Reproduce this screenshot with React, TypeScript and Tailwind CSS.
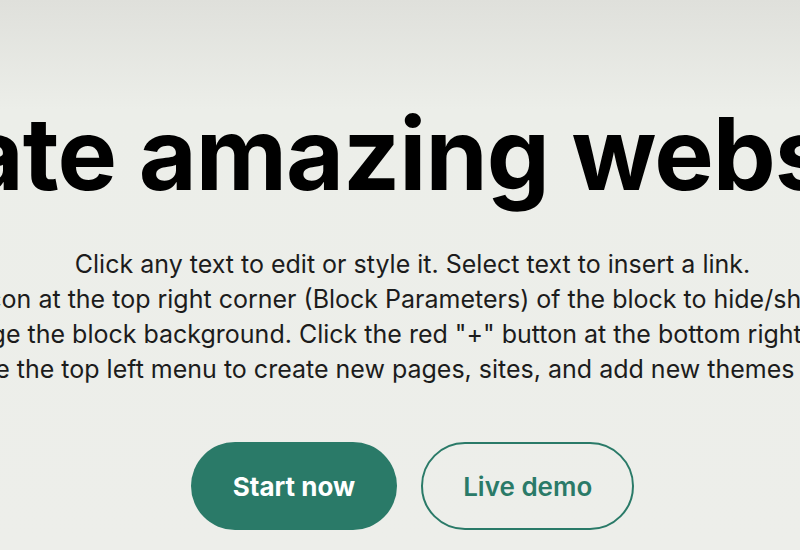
export default function App() {
  return (
    <div className="min-h-screen w-full overflow-hidden bg-[linear-gradient(to_bottom,#dfe0db_0px,#eceee9_110px,#edeeea_100%)] font-['Inter','Noto_Sans',sans-serif]">
      {/* hero */}
      <main className="flex flex-col items-center pt-[94px]">
        <h1 className="whitespace-nowrap text-center text-[100px] font-bold leading-[120px] tracking-[-1px] text-black">
          Create amazing websites
        </h1>
        <p className="ml-[25px] mt-[33px] whitespace-nowrap text-center text-[25px] leading-[35px] text-[#1c1c1c]">
          Click any text to edit or style it. Select text to insert a link.
          <br />
          Click the blue "Gear" icon at the top right corner (Block Parameters) of the block to hide/show buttons, text, title and
          <br />
          change the block background. Click the red "+" button at the bottom right corner.
          <br />
          Use the top left menu to create new pages, sites, and add new themes here.
        </p>
        {/* buttons */}
        <section className="ml-[25px] mt-[55px] flex items-center gap-[24px]">
          <button className="flex h-[88px] items-center rounded-full bg-[#2a7a68] px-[42px] text-[26px] font-bold text-white">
            Start now
          </button>
          <button className="flex h-[88px] items-center rounded-full border-2 border-[#2a7a68] px-[40px] text-[26px] font-semibold text-[#2a7a68]">
            Live demo
          </button>
        </section>
      </main>
    </div>
  );
}
